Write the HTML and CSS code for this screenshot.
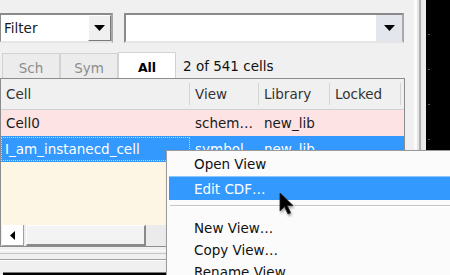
FILE: index.html
```html
<!DOCTYPE html>
<html>
<head>
<meta charset="utf-8">
<link rel="stylesheet" href="styles.css">
</head>
<body>
<div class="app">
  <div class="panel">
    <div class="filters">
      <div class="combo combo1">
        <span class="combo-text">Filter</span>
        <span class="combo-btn"><svg width="11" height="6" viewBox="0 0 11 6"><path d="M0 0H11L5.5 6Z" fill="#000"/></svg></span>
      </div>
      <div class="combo combo2">
        <span class="combo-text"></span>
        <span class="combo-btn btn2"><svg width="11" height="6" viewBox="0 0 11 6"><path d="M0 0H11L5.5 6Z" fill="#000"/></svg></span>
      </div>
    </div>
    <div class="tabs-row">
      <div class="tab">Sch</div>
      <div class="tab">Sym</div>
      <div class="tab active">All</div>
      <div class="count">2 of 541 cells</div>
    </div>
    <div class="table">
      <div class="grid head">
        <div class="hc">Cell</div>
        <div class="hc">View</div>
        <div class="hc">Library</div>
        <div class="hc">Locked</div>
        <div class="hc last"></div>
      </div>
      <div class="grid row pink">
        <div class="c">Cell0</div>
        <div class="c">schem…</div>
        <div class="c">new_lib</div>
        <div class="c"></div>
        <div class="c"></div>
      </div>
      <div class="grid row sel">
        <div class="c focus">I_am_instanecd_cell</div>
        <div class="c">symbol</div>
        <div class="c">new_lib</div>
        <div class="c"></div>
        <div class="c"></div>
      </div>
      <div class="empty"></div>
      <div class="hscroll">
        <div class="arrow"><svg width="5" height="9" viewBox="0 0 5 9"><path d="M5 0V9L0 4.5Z" fill="#000"/></svg></div>
        <div class="thumb"></div>
        <div class="track"></div>
      </div>
    </div>
    <div class="sep1"></div>
    <div class="sep2"></div>
    <div class="blackbar"></div>
  </div>
  <div class="strip"></div>
  <div class="dark">
    <span class="tick"></span><span class="tick"></span><span class="tick"></span><span class="tick"></span>
  </div>
</div>

<div class="menu">
  <div class="mi">Open View</div>
  <div class="mi hl">Edit CDF…</div>
  <div class="msep"></div>
  <div class="mi">New View…</div>
  <div class="mi">Copy View…</div>
  <div class="mi">Rename View</div>
</div>

<svg class="cursor" width="16" height="25" viewBox="0 0 16 25">
  <path d="M1 1V19L5.5 14.6L9 22L11.6 20.8L8.2 13.6H14Z" fill="#000" stroke="#222" stroke-width="0.8"/>
</svg>
</body>
</html>
```

FILE: styles.css
```css
html, body {
  margin: 0;
  padding: 0;
}
body {
  width: 450px;
  height: 275px;
  overflow: hidden;
  background: #f0f0f0;
  font-family: "DejaVu Sans", Verdana, sans-serif;
  font-size: 13.5px;
  color: #1a1a1a;
  position: relative;
}
.app {
  display: flex;
  height: 275px;
  overflow: hidden;
}
.panel {
  width: 405px;
  flex: none;
  padding-top: 13px;
  display: flex;
  flex-direction: column;
  box-sizing: border-box;
  overflow: hidden;
}
.panel > * {
  flex-shrink: 0;
}
.filters {
  display: flex;
  gap: 11px;
  height: 30px;
  padding-right: 1px;
}
.combo {
  display: flex;
  align-items: stretch;
  box-sizing: border-box;
  background: #fff;
  border-top: 2px solid #8a8a8a;
  border-left: 2px solid #8a8a8a;
  border-right: 2px solid #a8a8a8;
  border-bottom: 2px solid #e6e6e6;
}
.combo1 {
  width: 114px;
  margin-left: -1px;
}
.combo2 {
  flex: 1;
}
.combo-text {
  flex: 1;
  padding-left: 3px;
  line-height: 26px;
}
.combo-btn {
  width: 21px;
  display: flex;
  align-items: center;
  justify-content: center;
  background: #f0f0f0;
  border-right: 1px solid #7a7a7a;
  border-bottom: 1px solid #7a7a7a;
  border-top: 1px solid #fff;
  border-left: 1px solid #fff;
}
.btn2 {
  width: 24px;
  background: #e4e6ee;
  border-color: #e4e6ee;
}
.tabs-row {
  display: flex;
  align-items: flex-end;
  margin-top: 9px;
  height: 26px;
  padding-left: 2px;
}
.tab {
  width: 58px;
  height: 25px;
  box-sizing: border-box;
  border: 1px solid #d2d2d2;
  border-bottom: none;
  background: #ececec;
  color: #8c8c8c;
  text-align: center;
  line-height: 28px;
}
.tab.active {
  height: 26px;
  background: #fff;
  color: #000;
  font-weight: bold;
  font-size: 12.5px;
  line-height: 30px;
}
.count {
  align-self: center;
  margin-left: 7px;
  color: #111;
  padding-top: 1px;
}
.table {
  height: 169px;
  box-sizing: border-box;
  border: 1px solid #8c8c8c;
  display: flex;
  flex-direction: column;
  background: #fff;
}
.grid {
  display: grid;
  grid-template-columns: 189px 69px 71px 71px 1fr;
}
.head {
  height: 31px;
  box-sizing: border-box;
  background: #f0f0f0;
  border-bottom: 1px solid #d0d0d0;
  color: #333;
}
.hc {
  padding-left: 5px;
  border-right: 1px solid #d4d4d4;
  margin: 4px 0;
  line-height: 22px;
}
.hc.last {
  border-right: none;
}
.row {
  height: 26px;
  line-height: 26px;
}
.c {
  padding-left: 5px;
  white-space: nowrap;
  overflow: hidden;
}
.pink {
  background: #fde3e3;
}
.sel {
  background: #3399ff;
  color: #fff;
}
.focus {
  border: 1px dotted #bcd9ff;
  line-height: 22px;
  margin: 1px 0;
  padding-left: 3px;
}
.empty {
  flex: 1;
  background: #fdf6e5;
}
.hscroll {
  height: 21px;
  flex-shrink: 0;
  display: flex;
  background: #ececec;
}
.arrow {
  width: 22px;
  margin-left: 1px;
  display: flex;
  align-items: center;
  justify-content: center;
  background: #fff;
  border-right: 1px solid #a0a0a0;
  border-bottom: 1px solid #a0a0a0;
  box-sizing: border-box;
}
.thumb {
  width: 120px;
  margin-left: 2px;
  box-sizing: border-box;
  background: #f3f3f3;
  border-top: 1px solid #fff;
  border-left: 1px solid #fff;
  border-right: 2px solid #8a8a8a;
  border-bottom: 2px solid #8a8a8a;
}
.track {
  flex: 1;
  background: #ebebeb;
}
.sep1 {
  margin-top: 3px;
  height: 2px;
  border-top: 1px solid #fcfcfc;
  border-bottom: 1px solid #c6c6c6;
}
.sep2 {
  margin-top: 5px;
  border-top: 1px solid #a2a2a2;
  border-bottom: 1px solid #fff;
}
.blackbar {
  margin-top: 11px;
  margin-left: 3px;
  height: 4px;
  background: #000;
  border-top: 1px solid #777;
}
.strip {
  width: 21px;
  flex: none;
  box-sizing: border-box;
  border-left: 9px solid #f0f0f0;
  border-right: 3px solid #ececec;
  background: linear-gradient(to right, #fbfbfb 0 3px, #e4e4e4 3px 5px, #b0b0b0 5px 7px, #e8e8e8 7px);
}
.dark {
  flex: 1;
  background: #000;
  display: flex;
  flex-direction: column;
  padding-top: 34px;
  gap: 34px;
}
.tick {
  display: block;
  width: 2px;
  height: 1px;
  margin-left: 2px;
  background: #555;
}
.menu {
  position: absolute;
  left: 166px;
  top: 150px;
  width: 300px;
  background: #fbfbfb;
  border: 1px solid #9a9a9a;
  padding: 2px 0 0 1px;
  box-shadow: 1px 1px 2px rgba(0,0,0,0.25);
}
.mi {
  height: 22px;
  line-height: 22px;
  padding-left: 25px;
  margin-left: 1px;
  color: #111;
}
.mi:first-child {
  height: 23px;
  line-height: 23px;
}
.mi.hl {
  height: 24px;
  line-height: 24px;
  background: #3399ff;
  border-top: 1px solid #8cc6ff;
  box-sizing: border-box;
  color: #fff;
}
.msep {
  height: 17px;
  box-sizing: border-box;
  padding-top: 5px;
}
.msep::before {
  content: "";
  display: block;
  margin-left: 2px;
  border-top: 1px solid #c4c4c4;
  border-bottom: 1px solid #fff;
}
.cursor {
  position: absolute;
  left: 279px;
  top: 192px;
  filter: drop-shadow(1px 2px 1px rgba(0,0,0,0.35));
}
```
